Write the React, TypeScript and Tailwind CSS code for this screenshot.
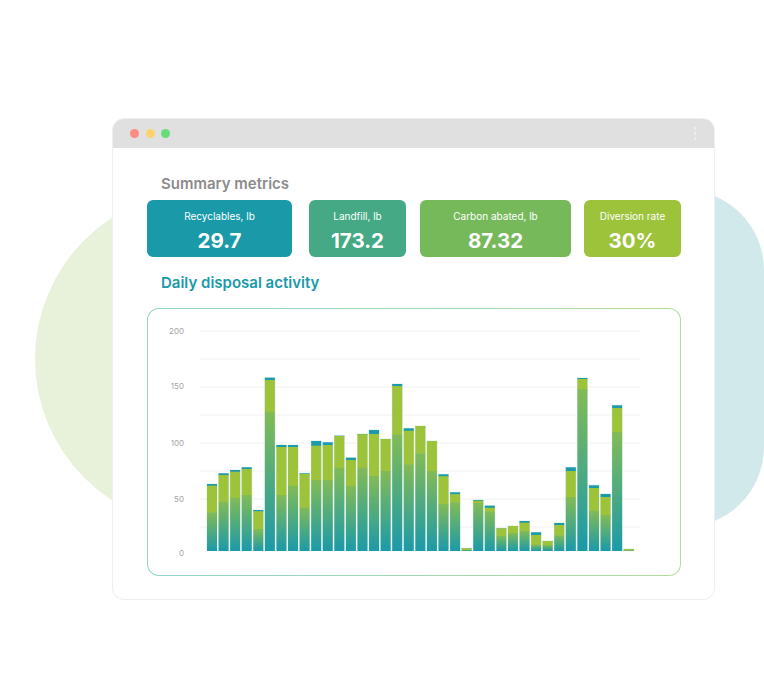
import React from "react";

// top of bar, top of yellow part, top of gradient part (px in page coordinates)
const bars: [number, number, number][] = [
  [484, 485.7, 512.3], [473.3, 475, 501.7], [470, 471.7, 497.7], [467.3, 469, 495],
  [510, 511.3, 529], [377.7, 380, 411.7], [445, 447, 495], [445, 447, 485.7],
  [473.3, 474, 507.3], [441, 445.7, 480], [442.3, 445, 480], [435.7, 436, 467.7],
  [457.7, 460, 486], [434, 434.3, 467.7], [430, 434, 476], [439, 439, 471],
  [384, 386, 434.3], [428.3, 430.7, 464.3], [426, 426, 453.3], [441, 441, 471],
  [474.3, 476.3, 504], [492.3, 494.3, 502.3], [548.3, 548.3, 550], [500, 500.7, 503],
  [505.7, 507.7, 511.7], [528.3, 528.3, 536], [526, 526, 533], [521, 522.7, 531],
  [532.3, 535, 544.7], [541, 541, 545], [523, 525, 535.3], [467.3, 471, 497],
  [378, 379, 389], [485.3, 488, 510.7], [494, 497, 515], [405.3, 408, 432],
  [549, 549, 550.3],
];

const gridLines = [331, 359, 387, 415, 443, 471, 499, 527];
const yLabels: [string, number][] = [["200", 331], ["150", 386], ["100", 443], ["50", 499], ["0", 553]];

const Chart = () => (
  <svg width="532" height="266" viewBox="148 309 532 266" className="block">
    <defs>
      <linearGradient id="barFill" x1="0" y1="0" x2="0" y2="1">
        <stop offset="0%" stopColor="#82bb55" />
        <stop offset="100%" stopColor="#1b9aa9" />
      </linearGradient>
    </defs>
    {gridLines.map((y) => (
      <rect key={y} x="200" y={y - 0.5} width="440" height="1" fill="#f1f1f1" />
    ))}
    {yLabels.map(([label, y]) => (
      <text key={label} x="184" y={y + 3} textAnchor="end" fontSize="8" fill="#a3a3a3" fontFamily="Inter, sans-serif">
        {label}
      </text>
    ))}
    {bars.map(([top, yellow, green], i) => {
      const x = 207 + i * 11.575;
      return (
        <g key={i}>
          <rect x={x - 0.5} y={top - 0.5} width="11" height={551.5 - top} fill="#c9e6e2" opacity="0.7" />
          <rect x={x} y={top} width="10" height={yellow - top + 0.5} fill="#1b9aa9" />
          <rect x={x} y={yellow} width="10" height={green - yellow + 0.5} fill="#9dc33b" />
          <rect x={x} y={green} width="10" height={551 - green} fill="url(#barFill)" />
        </g>
      );
    })}
  </svg>
);

const Metric = ({ label, value, className }: { label: string; value: string; className: string }) => (
  <div className={`h-[57px] rounded-[6px] flex flex-col items-center text-white pt-[9px] ${className}`}>
    <p className="text-[10px] leading-[14px]">{label}</p>
    <p className="text-[20.5px] leading-[26px] font-bold mt-[5px]">{value}</p>
  </div>
);

export default function App() {
  return (
    <div className="relative w-[764px] h-[696px] bg-white overflow-hidden font-['Inter',sans-serif]">
      {/* background blobs */}
      <div className="absolute left-[35px] top-[191px] w-[336px] h-[336px] rounded-full bg-[#e8f1da]" />
      <div className="absolute left-[560px] top-[190px] w-[204px] h-[337px] rounded-[80px] bg-[#d1e9eb]" />

      <div className="relative ml-[112px] pt-[118px] w-[603px]">
        <div className="h-[482px] rounded-[12px] border border-[#ecefef] bg-white overflow-hidden">
          <div className="h-[30px] -mx-px -mt-px bg-[#e0e0e0] flex items-center pl-[18px] pr-[19px]">
            <div className="flex gap-[6.5px]">
              <span className="w-[9px] h-[9px] rounded-full bg-[#fd8a83]" />
              <span className="w-[9px] h-[9px] rounded-full bg-[#fdd36f]" />
              <span className="w-[9px] h-[9px] rounded-full bg-[#66dc7d]" />
            </div>
            <div className="ml-auto flex flex-col gap-[2px]">
              <span className="w-[2px] h-[3px] bg-[#ececec]" />
              <span className="w-[2px] h-[3px] bg-[#ececec]" />
              <span className="w-[2px] h-[3px] bg-[#ececec]" />
            </div>
          </div>

          <div className="pl-[34px] pt-[27px]">
            <h2 className="ml-[14px] text-[15px] leading-[18px] font-semibold text-[#8c8c8c]">Summary metrics</h2>
            <div className="flex mt-[7px]">
              <Metric label="Recyclables, lb" value="29.7" className="w-[145px] bg-[#1a9aa9]" />
              <Metric label="Landfill, lb" value="173.2" className="w-[97px] ml-[17px] bg-[#45a985]" />
              <Metric label="Carbon abated, lb" value="87.32" className="w-[151px] ml-[14px] bg-[#76b95b]" />
              <Metric label="Diversion rate" value="30%" className="w-[97px] ml-[13px] bg-[#9dc33b]" />
            </div>
            <h2 className="ml-[14px] mt-[17px] text-[15px] leading-[18px] font-semibold text-[#1a9aa9]">Daily disposal activity</h2>
            <div className="mt-[16px] w-[534px] h-[268px] rounded-[12px] p-px bg-gradient-to-r from-[#8fd2c8] to-[#b4da9c]">
              <div className="w-full h-full rounded-[11px] bg-white overflow-hidden">
                <Chart />
              </div>
            </div>
          </div>
        </div>
      </div>
    </div>
  );
}
